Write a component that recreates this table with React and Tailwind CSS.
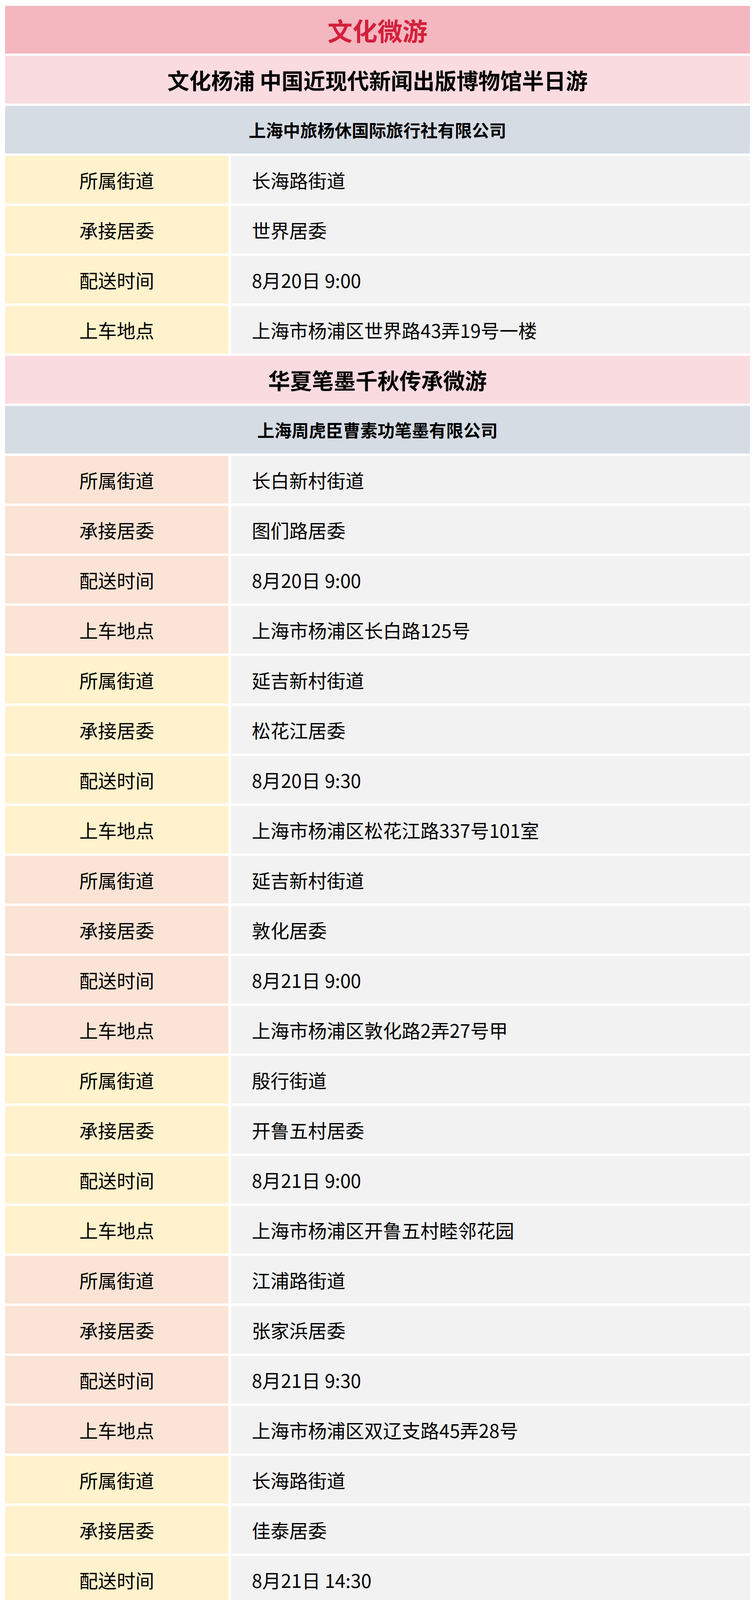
import React from "react";

const firstTour = {
  title: "文化杨浦 中国近现代新闻出版博物馆半日游",
  company: "上海中旅杨休国际旅行社有限公司",
  groups: [
    { street: "长海路街道", committee: "世界居委", time: "8月20日 9:00", place: "上海市杨浦区世界路43弄19号一楼", tone: "yellow" },
  ],
};

const secondTour = {
  title: "华夏笔墨千秋传承微游",
  company: "上海周虎臣曹素功笔墨有限公司",
  groups: [
    { street: "长白新村街道", committee: "图们路居委", time: "8月20日 9:00", place: "上海市杨浦区长白路125号", tone: "peach" },
    { street: "延吉新村街道", committee: "松花江居委", time: "8月20日 9:30", place: "上海市杨浦区松花江路337号101室", tone: "yellow" },
    { street: "延吉新村街道", committee: "敦化居委", time: "8月21日 9:00", place: "上海市杨浦区敦化路2弄27号甲", tone: "peach" },
    { street: "殷行街道", committee: "开鲁五村居委", time: "8月21日 9:00", place: "上海市杨浦区开鲁五村睦邻花园", tone: "yellow" },
    { street: "江浦路街道", committee: "张家浜居委", time: "8月21日 9:30", place: "上海市杨浦区双辽支路45弄28号", tone: "peach" },
    { street: "长海路街道", committee: "佳泰居委", time: "8月21日 14:30", place: "上海市杨浦区营口路789弄68号一楼", tone: "yellow" },
  ],
};

const Row = ({ label, value, tone }) => (
  <div className="grid grid-cols-[572px_1fr] gap-x-[7px]">
    <div
      className={`h-[122px] flex items-center justify-center text-[48px] text-black ${
        tone === "peach" ? "bg-[#fbe4d5]" : "bg-[#fff2cc]"
      }`}
    >
      {label}
    </div>
    <div className="h-[122px] flex items-center pl-[53px] bg-[#f2f2f2] text-[48px] text-black">
      {value}
    </div>
  </div>
);

const Tour = ({ tour }) => (
  <>
    <div className="h-[122px] flex items-center justify-center bg-[#fadbe0] text-[56px] font-bold text-black">
      {tour.title}
    </div>
    <div className="h-[122px] flex items-center justify-center bg-[#d6dce4] text-[44px] font-bold text-black">
      {tour.company}
    </div>
    {tour.groups.map((g, i) => (
      <React.Fragment key={i}>
        <Row label="所属街道" value={g.street} tone={g.tone} />
        <Row label="承接居委" value={g.committee} tone={g.tone} />
        <Row label="配送时间" value={g.time} tone={g.tone} />
        <Row label="上车地点" value={g.place} tone={g.tone} />
      </React.Fragment>
    ))}
  </>
);

export default function App() {
  return (
    <div
      className="bg-white w-full px-[13px] py-[15px] flex flex-col gap-[6px] leading-none"
      style={{ fontFamily: '"Noto Sans CJK SC", "Noto Sans", sans-serif' }}
    >
      <div className="h-[122px] flex items-center justify-center bg-[#f4b6bf] text-[64px] font-bold text-[#d3203c]">
        文化微游
      </div>
      <Tour tour={firstTour} />
      <Tour tour={secondTour} />
    </div>
  );
}
